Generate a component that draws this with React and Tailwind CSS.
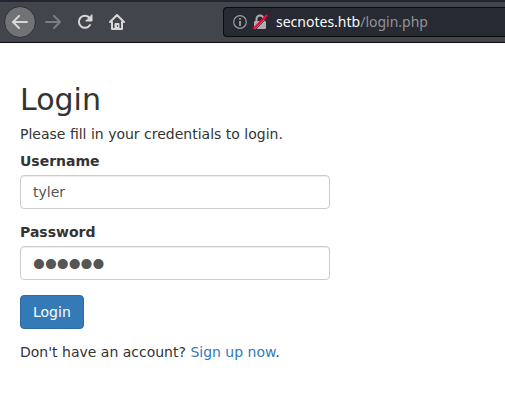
import React from "react";

function Toolbar() {
  return (
    <header className="flex h-[43px] items-center border-t-2 border-b border-t-[#23252f] border-b-[#0c0c0d] bg-[#42454c] pl-1 text-[#d7d7d5]">
      <button
        type="button"
        aria-label="Back"
        className="flex size-8 shrink-0 items-center justify-center rounded-full border border-[#2d2f35] bg-[#717276]"
      >
        <svg className="size-4" viewBox="0 0 16 16" fill="none" stroke="currentColor" strokeWidth="2" strokeLinecap="round" strokeLinejoin="round">
          <path d="M15 8H1.5M7 2L1 8l6 6" />
        </svg>
      </button>
      <button type="button" aria-label="Forward" disabled className="ml-[9px] shrink-0 text-[#7b7d80]">
        <svg className="size-4" viewBox="0 0 16 16" fill="none" stroke="currentColor" strokeWidth="2" strokeLinecap="round" strokeLinejoin="round">
          <path d="M1 8h13.5M9 2l6 6-6 6" />
        </svg>
      </button>
      <button type="button" aria-label="Reload" className="ml-4 shrink-0">
        <svg className="size-4" viewBox="0 0 16 16" fill="none" stroke="currentColor" strokeWidth="2" strokeLinecap="round">
          <path d="M12.6 4A6 6 0 1 0 13 11" />
          <path d="M15 1v6H9z" fill="currentColor" strokeWidth="1" strokeLinejoin="round" />
        </svg>
      </button>
      <button type="button" aria-label="Home" className="ml-4 shrink-0">
        <svg className="size-4" viewBox="0 0 16 16" fill="none" stroke="currentColor" strokeWidth="2" strokeLinecap="round" strokeLinejoin="round">
          <path d="M1 8l7-7 7 7M3 8v7h10V8" />
          <path d="M6 15v-5.5h4V15z" fill="currentColor" strokeWidth="1" />
          <path d="M8.6 11.5v1" stroke="#42454c" strokeWidth="1" />
        </svg>
      </button>
      <div className="ml-[98px] flex h-[30px] min-w-0 flex-1 items-center rounded-l border border-r-0 border-[#0c0c0d] bg-[#272933] pl-[9px] text-[#9d9ea2]">
        <svg className="size-[14px] shrink-0" viewBox="0 0 14 14" fill="none" stroke="currentColor">
          <circle cx="7" cy="7" r="6.3" strokeWidth="1.2" />
          <path d="M7 6v5" strokeWidth="1.8" />
          <path d="M7 3v1.8" strokeWidth="1.8" />
        </svg>
        <svg className="ml-[5px] size-4 shrink-0" viewBox="0 0 16 16" fill="none">
          <path d="M4.5 7.5V5a3.5 3.5 0 0 1 7 0v2.5" stroke="#acadaf" strokeWidth="2" />
          <rect x="2" y="7" width="12" height="8" rx="1" fill="#acadaf" />
          <path d="M3 16L15.5 3" stroke="#272933" strokeWidth="1" />
          <path d="M1.5 15L15 1" stroke="#f5063c" strokeWidth="2.2" />
        </svg>
        <div role="textbox" aria-label="Address" className="ml-2 truncate font-['Noto_Sans',sans-serif] text-sm text-[#f9f9fa]">
          secnotes.htb<span className="text-[#939395]">/login.php</span>
        </div>
      </div>
    </header>
  );
}

const inputClass =
  "mt-[6px] block h-[34px] w-full rounded border border-[#cccccc] bg-white px-3 text-[#555555] shadow-[inset_0_1px_1px_rgba(0,0,0,0.075)] outline-none";

export default function App() {
  return (
    <div className="min-h-screen bg-white font-['DejaVu_Sans',sans-serif] text-sm leading-5 text-[#333333]">
      <Toolbar />
      <main className="max-w-[350px] px-5 pt-10">
        <h2 className="mb-2 text-[30px] leading-[33px]">Login</h2>
        <p className="mb-[9px]">Please fill in your credentials to login.</p>
        <form onSubmit={(e) => e.preventDefault()}>
          <div className="mb-[15px]">
            <label htmlFor="username" className="block leading-4 font-bold">Username</label>
            <input id="username" type="text" defaultValue="tyler" className={inputClass} />
          </div>
          <div className="mb-[15px]">
            <label htmlFor="password" className="block leading-4 font-bold">Password</label>
            <input
              id="password"
              type="password"
              defaultValue="secret"
              className={inputClass + " pt-1 font-['Liberation_Serif',serif] text-[34px] [-webkit-text-stroke:2px_#555555]"}
            />
          </div>
          <button type="submit" className="mb-[13px] block h-[34px] rounded border border-[#2e6da4] bg-[#337ab7] px-3 text-white">
            Login
          </button>
          <p>
            Don't have an account? <a href="#signup" className="text-[#337ab7]">Sign up now</a>.
          </p>
        </form>
      </main>
    </div>
  );
}
